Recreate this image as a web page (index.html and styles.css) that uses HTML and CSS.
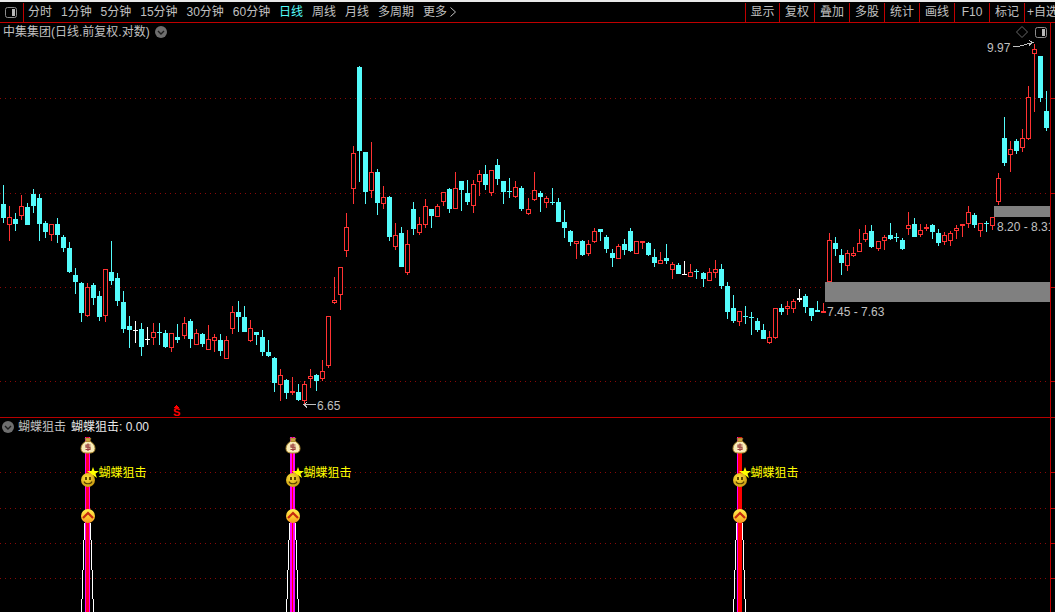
FILE: index.html
```html
<!DOCTYPE html>
<html lang="zh-CN">
<head>
<meta charset="utf-8">
<title>中集集团</title>
<link rel="stylesheet" href="styles.css">
</head>
<body>
<svg class="defs" width="0" height="0" aria-hidden="true">
  <defs>
    <symbol id="i-layout" viewBox="0 0 12 11">
      <rect class="lay-box" x=".5" y=".5" width="11" height="10" rx="2"/>
      <rect class="lay-fill" x="7" y="2" width="3" height="7"/>
    </symbol>
    <symbol id="i-collapse" viewBox="0 0 12 12">
      <circle class="col-disc" cx="6" cy="6" r="6"/>
      <path class="col-mark" d="M3 5l3 3 3-3"/>
    </symbol>
    <radialGradient id="g-smile" cx=".4" cy=".35" r=".7">
      <stop offset="0" stop-color="#ffe23a"/><stop offset="1" stop-color="#c99a10"/>
    </radialGradient>
    <linearGradient id="g-up" x1="0" y1="0" x2="0" y2="1">
      <stop offset="0" stop-color="#ffee50"/><stop offset=".55" stop-color="#ffc830"/><stop offset="1" stop-color="#f49820"/>
    </linearGradient>
    <g id="i-bag">
      <path class="bag-neck" d="M-3-8h6l-1 4h-4z"/>
      <path class="bag-body" d="M-2.500-4.500h5C5-3 7-.5 7 2.500 7 5.500 5 7 2 7h-4c-3 0-5-1.500-5-4.500 0-3 2-5.500 4.500-7z"/>
      <path class="bag-sign" d="M2.500-1H-2V1.200H2V3.500H-2.500M0-2.500V5"/>
    </g>
    <g id="i-smile">
      <circle class="smile-disc" r="7"/>
      <rect class="smile-eye" x="-3" y="-3" width="2" height="3"/>
      <rect class="smile-eye" x="1" y="-3" width="2" height="3"/>
      <path class="smile-mouth" d="M-4 1.500C-3 4.500 3 4.500 4 1.500"/>
    </g>
    <g id="i-up">
      <circle class="up-disc" r="7"/>
      <path class="up-mark" d="M-5 2L0-3 5 2"/>
    </g>
    <path id="i-star" class="star" d="M5.500 0L7 4H11.500L8 6.700 9.500 11 5.500 8.300 1.500 11 3 6.700 -.5 4H4z"/>
  </defs>
</svg>

<header class="toolbar">
  <div class="layout-cell"><svg class="icon-layout"><use href="#i-layout"/></svg></div>
  <nav class="periods">
    <span>分时</span><span>1分钟</span><span>5分钟</span><span>15分钟</span><span>30分钟</span><span>60分钟</span>
    <span class="is-active">日线</span><span>周线</span><span>月线</span><span>多周期</span>
    <span class="more">更多<svg class="more-chevron" viewBox="0 0 6 10"><path d="M.5.500L5.500 5 .5 9.500"/></svg></span>
  </nav>
  <div class="tools">
    <span>显示</span><span>复权</span><span>叠加</span><span>多股</span><span>统计</span><span>画线</span><span>F10</span><span>标记</span><span class="tool-last">+自选</span>
  </div>
</header>

<section class="panel panel-price">
  <div class="plot">
    <svg class="canvas canvas-price" id="price-canvas" viewBox="0 23 1050 394" width="1050" height="394"></svg>
    <div class="panel-title">
      <span>中集集团(日线.前复权.对数)</span>
      <svg class="icon-collapse"><use href="#i-collapse"/></svg>
    </div>
    <div class="corner-tools">
      <svg class="icon-diamond" viewBox="0 0 12 12"><path d="M6 .5L11.500 6 6 11.500 .5 6z"/></svg>
      <svg class="icon-layout"><use href="#i-layout"/></svg>
    </div>
  </div>
  <svg class="axis" id="price-axis" viewBox="0 23 4 394" width="4" height="394"></svg>
</section>

<section class="panel panel-signal">
  <div class="plot">
    <svg class="canvas canvas-signal" id="signal-canvas" viewBox="0 418 1050 194" width="1050" height="194"></svg>
    <div class="panel-title signal-title">
      <svg class="icon-collapse"><use href="#i-collapse"/></svg>
      <span>蝴蝶狙击</span>
      <span class="signal-value">蝴蝶狙击: 0.00</span>
    </div>
  </div>
  <svg class="axis" id="signal-axis" viewBox="0 418 4 194" width="4" height="194"></svg>
</section>

<script src="chart.js"></script>
</body>
</html>
```

FILE: styles.css
```css
* { box-sizing: border-box; }

html, body {
  margin: 0;
  height: 612px;
  overflow: hidden;
  background: #000;
  color: #c0c0c0;
  font: 12px/16px "Liberation Sans", "Noto Sans CJK SC", sans-serif;
}

.defs { position: absolute; }

/* toolbar */
.toolbar {
  display: flex;
  height: 23px;
  border-top: 2px solid #e9e9e9;
  border-bottom: 1px solid #c00000;
  white-space: nowrap;
}
.layout-cell {
  width: 24px;
  flex: none;
  display: flex;
  align-items: center;
  padding-left: 5px;
  margin-top: 1px;
  border-right: 1px solid #c00000;
}
.icon-layout { width: 12px; height: 11px; flex: none; }
.periods {
  display: flex;
  align-items: center;
  gap: 8.950px;
  padding-left: 4px;
  flex: 1;
}
.periods .is-active { color: #54fcfc; }
.more { display: inline-flex; align-items: center; gap: 3px; }
.more-chevron { width: 6px; height: 10px; fill: none; stroke: #c0c0c0; }
.tools { display: flex; width: 310px; flex: none; }
.tools span {
  width: 35px;
  flex: none;
  margin-top: 1px;
  text-align: center;
  line-height: 19px;
  border-left: 1px solid #c00000;
}
.tools span:first-child { width: 34px; }
.tools .tool-last { text-align: left; padding-left: 2px; width: 31px; overflow: hidden; }

/* panels */
.panel { display: flex; }
.panel-price { height: 395px; border-bottom: 1px solid #b80000; }
.panel-signal { height: 194px; }
.plot {
  position: relative;
  width: 1050px;
  flex: none;
  overflow: hidden;
}
.canvas { position: absolute; left: 0; top: 0; display: block; shape-rendering: crispEdges; }
.axis { flex: none; width: 5px; border-left: 1px solid #c00000; shape-rendering: crispEdges; display: block; }
.tick { fill: #c00000; }

.panel-title {
  position: relative;
  display: flex;
  align-items: center;
  gap: 5px;
  height: 18px;
  padding-left: 3px;
}
.icon-collapse { width: 12px; height: 12px; flex: none; }
.signal-title { padding-left: 2px; height: 17px; gap: 4px; }
.signal-value { color: #e8e8e8; margin-left: 1px; }

.corner-tools {
  position: absolute;
  right: 3px;
  top: 3px;
  display: flex;
  align-items: center;
  gap: 7px;
}
.icon-diamond { width: 12px; height: 12px; fill: none; stroke: #666; }

/* icon parts */
.lay-box { fill: none; stroke: #8c8c8c; }
.lay-fill { fill: #b8b8b8; }
.col-disc { fill: #6e6e6e; }
.col-mark { fill: none; stroke: #1c1c1c; stroke-width: 1.400; }
.bag-neck { fill: #c9a040; stroke: #8a5a20; stroke-width: .5; }
.bag-body { fill: #f8ecb8; stroke: #b08a30; }
.bag-sign { fill: none; stroke: #9a4040; stroke-width: 1.200; }
.smile-disc { fill: url(#g-smile); }
.smile-eye { fill: #5a4300; }
.smile-mouth { fill: none; stroke: #5a4300; stroke-width: 1.200; }
.up-disc { fill: url(#g-up); }
.up-mark { fill: none; stroke: #c42a10; stroke-width: 2.200; }
.star { fill: #ffff00; }
.icon-art { shape-rendering: geometricPrecision; }

/* chart parts */
.grid { stroke: #8a0808; stroke-dasharray: 1 4; shape-rendering: auto; }
.zone { fill: #808080; }
.up { fill: #ff3232; }
.up-box { fill: #000; stroke: #ff3232; }
.down { fill: #54fcfc; }
.flat { fill: #fff; }
.pointer { fill: none; stroke: #c0c0c0; }
.pointer-text { fill: #c0c0c0; font-size: 12px; }
.sig-s { fill: #ff0000; font: bold 11px "Liberation Sans", sans-serif; }
.sig-arrow { fill: #ff0000; }
.bar-edge { fill: #ff00ff; }
.bar-core { fill: #ff0000; }
.bar-core-pink { fill: #ff0028; }
.bar-outline { fill: none; stroke: #fff; }
.sig-label { fill: #ffff00; font-size: 12px; }
```

FILE: chart.js
```js
var CANDLES = "c185,204,218,223 r206,217,225,241 c213,219,224,231 r195,206,216,220 c203,207,225,225 c189,194,206,213 c194,198,224,241 c221,223,232,238 r224,224,235,241 c218,224,235,243 c235,237,248,252 c242,248,272,273 c268,275,282,294 c282,283,313,322 r283,287,316,317 c283,285,298,305 c291,296,317,321 r269,269,316,322 c241,272,281,285 c273,278,301,306 c291,302,329,333 c316,326,330,348 w321,330,331,343 c323,329,347,356 w327,339,340,345 r323,332,338,345 c323,332,333,345 c330,333,347,348 r333,333,348,352 c324,337,340,343 " +
  "r317,323,336,339 c319,321,339,348 r329,333,345,345 c333,334,344,347 r325,339,350,350 r334,337,341,352 c334,340,351,356 r336,340,359,359 r306,312,329,334 c301,312,317,332 c306,317,332,332 r320,328,341,342 c332,332,335,345 c330,337,352,356 c340,352,356,357 c357,358,383,392 r369,375,385,401 c379,380,393,399 r377,391,393,395 c384,392,400,401 r381,384,401,404 r369,376,379,388 c374,375,381,391 r360,371,379,381 r316,316,366,368 r277,300,303,304 r267,267,295,310 r213,227,251,257 " +
  "r146,153,189,204 c66,67,151,182 c152,152,192,204 r142,172,191,198 c169,172,203,215 r186,197,204,209 c196,197,237,241 r223,235,247,250 c227,233,267,267 r230,244,273,275 c202,209,229,235 r217,224,233,235 r199,206,225,228 c209,209,216,228 r204,206,217,217 r192,192,202,206 c188,189,209,213 r172,188,209,209 c181,181,190,211 c180,193,202,205 r180,184,206,213 r170,174,182,196 c165,174,185,190 r170,170,193,196 c159,165,179,185 c181,181,192,204 c178,191,192,198 r181,187,197,198 c186,188,209,211 " +
  "r198,209,214,215 r172,190,200,201 c191,193,197,212 r196,198,203,208 c188,202,203,205 c198,202,222,222 c210,222,228,238 c230,231,242,246 r241,241,244,259 c240,241,255,256 r240,244,254,256 r228,231,242,243 c229,229,232,241 c235,237,249,253 c249,253,258,267 r244,246,259,259 c239,244,250,255 c228,231,251,252 r241,241,254,254 r241,241,243,249 c242,243,255,256 c249,257,263,267 r252,260,264,264 c244,258,261,264 r262,264,270,279 c263,265,274,274 w261,274,275,275 r264,272,277,277 c269,271,272,279 " +
  "c272,273,279,287 r268,272,281,281 r260,269,273,278 c264,269,286,289 c282,286,312,319 c295,308,321,323 r311,311,322,326 c306,316,317,324 c312,317,318,335 c318,321,330,332 c324,330,339,339 r331,337,343,344 r308,308,338,339 c304,308,312,315 r301,306,309,315 r299,301,309,313 w289,298,300,302 c294,296,307,313 c308,308,316,321 c301,310,312,312 r303,311,313,313 r233,240,282,282 c237,243,249,256 c249,255,263,275 r250,253,266,271 r247,253,256,257 r229,243,252,252 r225,233,240,242 c225,231,247,248 " +
  "r241,241,249,251 r235,237,241,250 c223,235,239,240 c233,237,238,242 c238,240,249,250 r212,225,229,235 c218,224,237,237 r224,230,235,237 r224,227,229,231 c224,225,232,239 c229,233,243,246 r232,235,242,245 r231,233,241,246 r225,228,231,239 r224,224,226,237 r206,212,224,228 c213,215,225,228 r223,223,231,237 c221,223,224,232 r217,217,226,230 r173,178,202,205 c117,138,163,166 r141,149,155,172 c139,141,151,154 r129,138,148,152 r86,97,139,140 r44,49,54,112 c56,56,98,102 c91,111,128,131";

function rect(cls, x, y, w, h) {
  return '<rect class="' + cls + '" x="' + x + '" y="' + y + '" width="' + w + '" height="' + h + '"/>';
}

function column(i) {
  return 3 + 6 * i + (i >= 30) + (i >= 58) + (i >= 87) + (i >= 116) + (i >= 145);
}

function candle(spec, i) {
  var v = spec.slice(1).split(",").map(Number);
  var kind = spec.charAt(0);
  var cls = kind === "c" ? "down" : kind === "r" ? "up" : "flat";
  var x = column(i);
  var h = v[2] - v[1];
  var out = rect(cls, x, v[0], 1, v[3] - v[0]);
  if (kind === "r" && h > 2) {
    out += rect("up-box", x - 1.5, v[1] + 0.5, 4, h - 1);
  } else {
    out += rect(cls, x - 2, v[1], 5, h);
  }
  return out;
}

function gridLines(ys) {
  return ys.map(function (y) {
    return '<line class="grid" x1="0" x2="1050" y1="' + (y + 0.5) + '" y2="' + (y + 0.5) + '"/>';
  }).join("");
}

function ticks(ys) {
  return ys.map(function (y) { return rect("tick", 0, y, 4, 1); }).join("");
}

function label(cls, x, y, text) {
  return '<text class="' + cls + '" x="' + x + '" y="' + y + '">' + text + "</text>";
}

var PRICE_GRID = [98, 193, 287, 381];
var SIGNAL_GRID = [472, 508, 543, 578];

document.getElementById("price-canvas").innerHTML =
  gridLines(PRICE_GRID) +
  CANDLES.split(" ").map(candle).join("") +
  rect("zone", 825, 282, 225, 20) +
  rect("zone", 994, 206, 56, 11) +
  label("pointer-text", 827, 316, "7.45 - 7.63") +
  label("pointer-text", 997, 231, "8.20 - 8.31") +
  label("pointer-text", 987, 52, "9.97") +
  '<path class="pointer" d="M1013 46.500H1018L1033 42.500M1029 40.500L1033 42.500 1029 45.500"/>' +
  label("pointer-text", 317, 410, "6.65") +
  '<path class="pointer" d="M304 404.500H316M307 402.500L304 404.500 307 407.500"/>' +
  '<path class="sig-arrow" d="M176.500 405L179 408H174z"/>' +
  label("sig-s", 173, 416, "S");

function signal(c, coreCls, edge) {
  var out = rect(coreCls, c - 2, 437, 5, 175) + edge(c);
  var steps = [[523, 540, 3], [540, 570, 4], [570, 599, 5], [599, 612, 6]];
  var d = "";
  steps.forEach(function (s) {
    var lx = c - s[2] + 0.5, rx = c + s[2] + 0.5;
    d += "M" + lx + " " + s[0] + "V" + s[1] + "M" + rx + " " + s[0] + "V" + s[1];
  });
  out += '<path class="bar-outline" d="' + d + '"/>';
  var cx = c + 1;
  out += '<g class="icon-art">' +
    '<use href="#i-star" x="' + (c + 0.5) + '" y="467"/>' +
    '<use href="#i-bag" x="' + cx + '" y="446"/>' +
    '<use href="#i-smile" x="' + cx + '" y="480"/>' +
    '<use href="#i-up" x="' + cx + '" y="516"/>' +
    "</g>";
  out += label("sig-label", c + 11.5, 477, "蝴蝶狙击");
  return out;
}

function edges(leftW, rightW) {
  return function (c) {
    var s = rect("bar-edge", c - 2, 437, leftW, 175);
    if (rightW) s += rect("bar-edge", c + 3 - rightW, 437, rightW, 175);
    return s;
  };
}

document.getElementById("signal-canvas").innerHTML =
  gridLines(SIGNAL_GRID) +
  signal(87, "bar-core-pink", edges(1, 1)) +
  signal(292, "bar-core", edges(2, 2)) +
  signal(739, "bar-core", edges(1, 0));

document.getElementById("price-axis").innerHTML = ticks(PRICE_GRID);
document.getElementById("signal-axis").innerHTML = ticks(SIGNAL_GRID);
```
